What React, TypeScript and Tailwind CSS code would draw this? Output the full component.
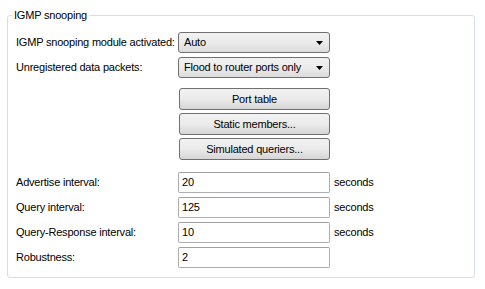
import { ReactNode } from "react";

const font = { fontFamily: '"Liberation Sans", Arial, sans-serif' };

function Select({ value }: { value: string }) {
  return (
    <div className="flex h-[21px] w-[152px] items-center justify-between rounded-[3px] border border-[#707070] bg-gradient-to-b from-[#f2f2f2] via-[#ebebeb] to-[#dcdcdc] pl-[5px] pr-[6px] leading-none text-black">
      <span className="whitespace-nowrap">{value}</span>
      <svg width="7" height="4" viewBox="0 0 7 4">
        <path d="M0 0h7L3.5 4z" fill="#000" />
      </svg>
    </div>
  );
}

function Button({ children }: { children: ReactNode }) {
  return (
    <button className="flex h-[22px] w-[151px] items-center justify-center rounded-[3px] border border-[#707070] bg-gradient-to-b from-[#f2f2f2] via-[#ebebeb] to-[#d6d6d6] leading-none text-black">
      {children}
    </button>
  );
}

function Field({ label, value, unit }: { label: string; value: string; unit?: string }) {
  return (
    <div className="flex h-[21px] items-center">
      <span className="w-[162px] whitespace-nowrap">{label}</span>
      <div className="flex h-[21px] w-[152px] items-center rounded-[2px] border border-[#abadb3] border-t-[#a0a0a0] bg-white pl-[3px]">
        {value}
      </div>
      {unit && <span className="ml-[4px]">{unit}</span>}
    </div>
  );
}

export default function App() {
  return (
    <div className="h-[289px] w-[485px] bg-white pl-[7px] pr-[10px] pt-[9px] text-[11px] tracking-[-0.2px] text-black" style={font}>
      <fieldset className="rounded-[3px] border border-[#d5dfe5] pb-[9px] pl-[8px] pt-[10px]">
        <legend className="-ml-[4px] px-[2px] leading-[13px]">IGMP snooping</legend>

        <div className="flex flex-col">
          <div className="flex h-[21px] items-center">
            <span className="w-[162px] whitespace-nowrap">IGMP snooping module activated:</span>
            <Select value="Auto" />
          </div>
          <div className="mt-[4px] flex h-[21px] items-center">
            <span className="w-[162px] whitespace-nowrap">Unregistered data packets:</span>
            <Select value="Flood to router ports only" />
          </div>

          <div className="ml-[163px] mt-[10px] flex flex-col gap-[3px]">
            <Button>Port table</Button>
            <Button>Static members...</Button>
            <Button>Simulated queriers...</Button>
          </div>

          <div className="mt-[12px] flex flex-col gap-[4px]">
            <Field label="Advertise interval:" value="20" unit="seconds" />
            <Field label="Query interval:" value="125" unit="seconds" />
            <Field label="Query-Response interval:" value="10" unit="seconds" />
            <Field label="Robustness:" value="2" />
          </div>
        </div>
      </fieldset>
    </div>
  );
}
